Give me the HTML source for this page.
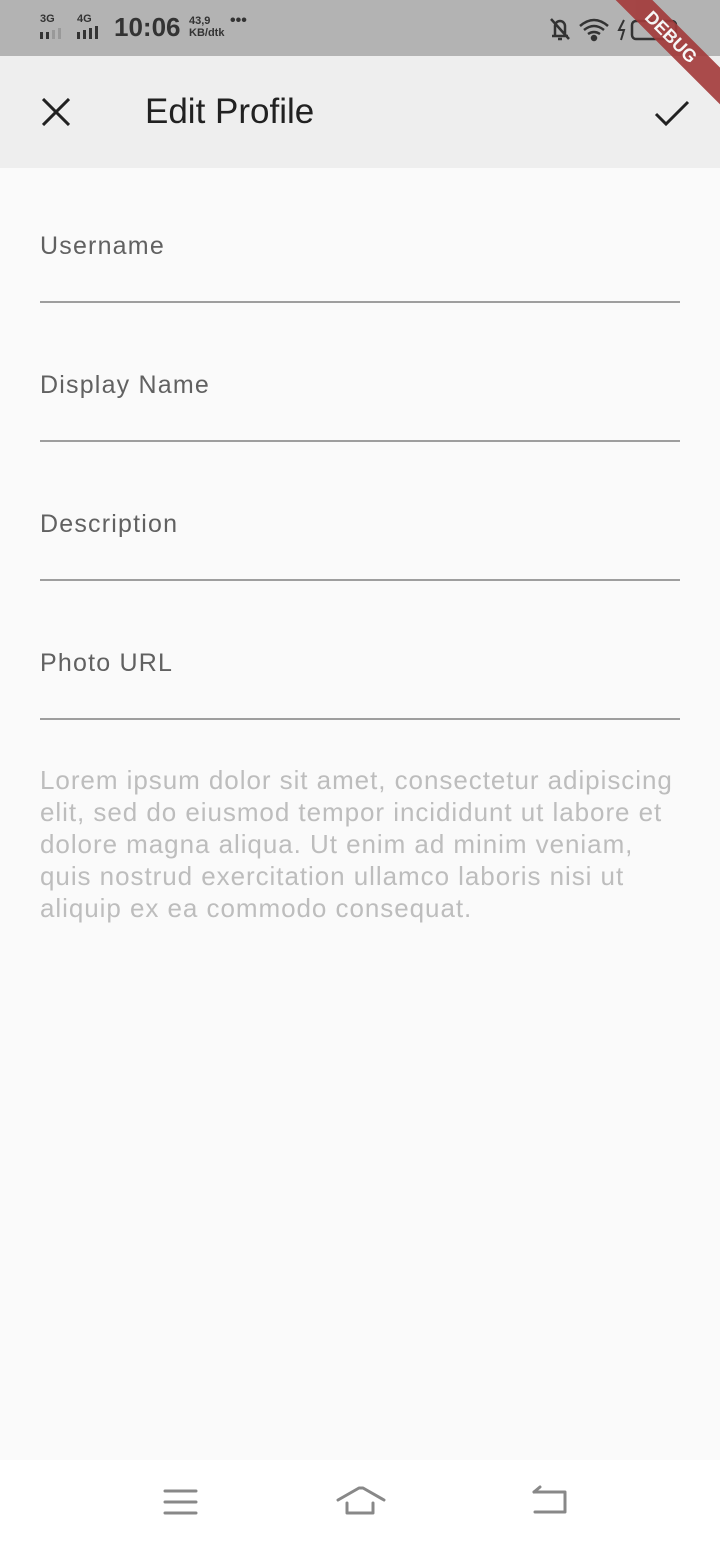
<!DOCTYPE html>
<html><head><meta charset="utf-8"><style>
body{margin:0;width:720px;height:1544px;background:#fafafa;font-family:"Liberation Sans",Roboto,sans-serif;position:relative;overflow:hidden}
.sb{position:absolute;top:0;left:0;width:720px;height:56px;background:#b3b3b3;color:#333}
.ab{position:absolute;top:56px;left:0;width:720px;height:112px;background:#eeeeee}
.title{position:absolute;left:145px;top:36px;font-size:35px;color:#212121}
.lbl{position:absolute;left:40px;font-size:25px;letter-spacing:1.2px;color:#616161}
.ln{position:absolute;left:40px;width:640px;height:2px;background:#9e9e9e}
.lorem{position:absolute;left:40px;top:764px;width:650px;font-size:26px;letter-spacing:0.95px;line-height:32px;color:#bdbdbd}
.nav{position:absolute;top:1460px;left:0;width:720px;height:84px;background:#fff}
.debug{position:absolute;top:24px;right:-36px;width:170px;height:26px;background:#a33a3a;opacity:.9;transform:rotate(45deg);color:#fff;font-size:18px;font-weight:bold;text-align:center;line-height:26px}
</style></head><body>
<div class="sb">
 <div style="position:absolute;left:40px;top:13px;font-size:11px;font-weight:bold">3G</div>
 <div style="position:absolute;left:77px;top:13px;font-size:11px;font-weight:bold">4G</div>
 <svg style="position:absolute;left:40px;top:26px" width="70" height="14"><g fill="#333"><rect x="0" y="6" width="3" height="7"/><rect x="6" y="6" width="3" height="7"/><rect x="12" y="4" width="3" height="9" fill="#999"/><rect x="18" y="2" width="3" height="11" fill="#999"/><rect x="37" y="6" width="3" height="7"/><rect x="43" y="4" width="3" height="9"/><rect x="49" y="2" width="3" height="11"/><rect x="55" y="0" width="3" height="13"/></g></svg>
 <div style="position:absolute;left:114px;top:12px;font-size:26px;font-weight:bold">10:06</div>
 <div style="position:absolute;left:189px;top:15px;font-size:11px;line-height:12px;font-weight:bold">43,9<br>KB/dtk</div>
 <div style="position:absolute;left:230px;top:12px;font-size:16px;font-weight:bold">•••</div>
 <svg style="position:absolute;left:548px;top:16px" width="135" height="26" fill="none" stroke="#333" stroke-width="2.5"><path d="M4 20h16M7 20V10a5 5 0 0 1 10 0v10M3 3l18 20M10 23h4"/><path d="M32 10q14-12 28 0M36 14q10-8 20 0M40 18q6-4 12 0"/><circle cx="46" cy="22" r="2" fill="#333"/><path d="M76 4l-5 10h5l-3 10" stroke-width="2"/><rect x="84" y="5" width="44" height="18" rx="4"/></svg>
</div>
<div class="ab">
 <svg style="position:absolute;left:42px;top:42px" width="28" height="28" stroke="#212121" stroke-width="3"><path d="M1 1L27 27M27 1L1 27"/></svg>
 <div class="title">Edit Profile</div>
 <svg style="position:absolute;left:654px;top:44px" width="36" height="28" fill="none" stroke="#212121" stroke-width="3"><path d="M2 14l10 10L34 2"/></svg>
</div>
<div class="debug">DEBUG</div>
<div class="lbl" style="top:232px">Username</div><div class="ln" style="top:301px"></div>
<div class="lbl" style="top:371px">Display Name</div><div class="ln" style="top:440px"></div>
<div class="lbl" style="top:510px">Description</div><div class="ln" style="top:579px"></div>
<div class="lbl" style="top:649px">Photo URL</div><div class="ln" style="top:718px"></div>
<div class="lorem">Lorem ipsum dolor sit amet, consectetur adipiscing elit, sed do eiusmod tempor incididunt ut labore et dolore magna aliqua. Ut enim ad minim veniam, quis nostrud exercitation ullamco laboris nisi ut aliquip ex ea commodo consequat.</div>
<div class="nav">
 <svg style="position:absolute;left:160px;top:24px" width="44" height="36" stroke="#888" stroke-width="3" stroke-linecap="round"><path d="M5 7h31M5 18h31M5 29h31"/></svg>
 <svg style="position:absolute;left:334px;top:22px" width="54" height="36" fill="none" stroke="#888" stroke-width="3" stroke-linecap="round" stroke-linejoin="round"><path d="M4 18L25 6h4l21 12"/><path d="M13 21v10h26V21"/></svg>
 <svg style="position:absolute;left:528px;top:22px" width="42" height="36" fill="none" stroke="#888" stroke-width="3" stroke-linecap="round" stroke-linejoin="round"><path d="M6 10h31v20H7"/><path d="M12 5L6 10" /></svg>
</div>
</body></html>
